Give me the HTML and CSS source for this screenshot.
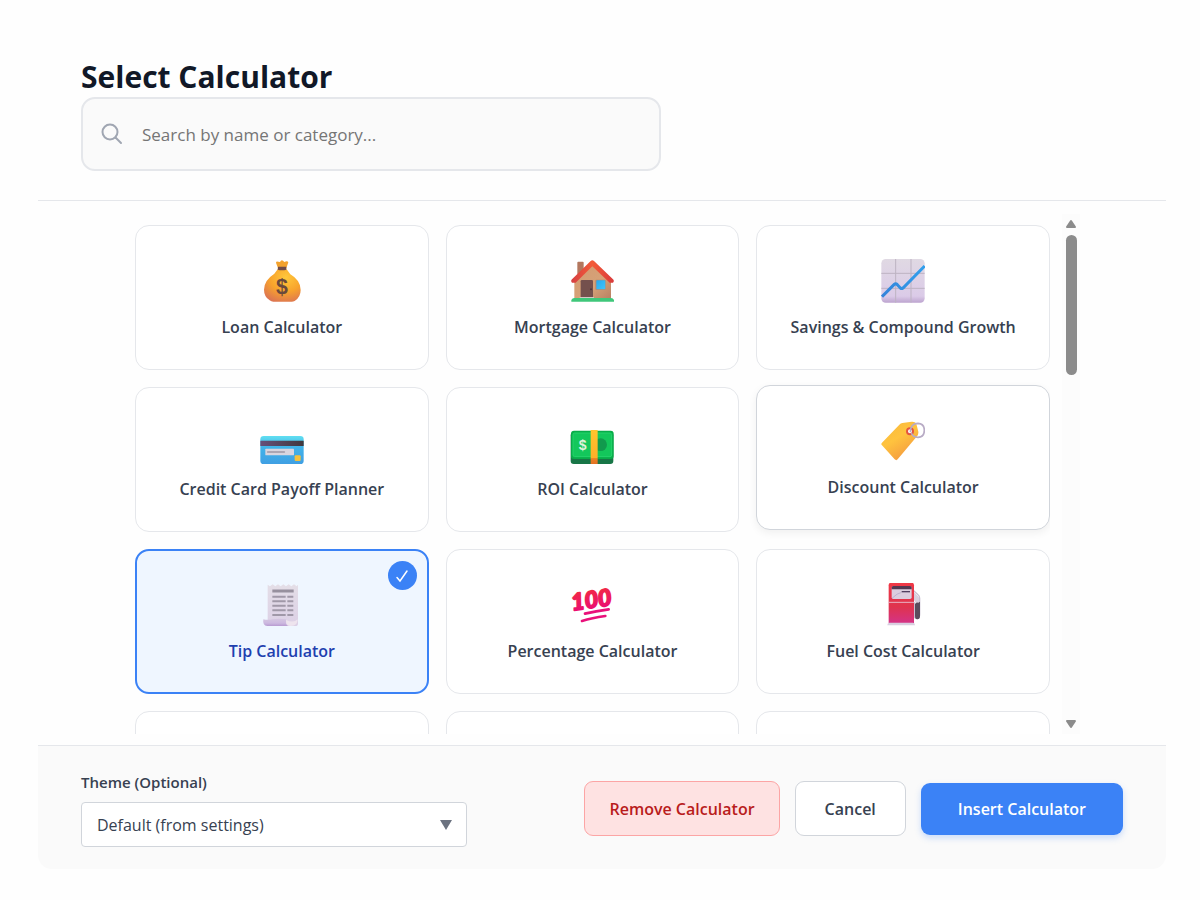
FILE: index.html
```html
<!DOCTYPE html>
<html lang="en">
<head>
  <meta charset="UTF-8">
  <meta name="viewport" content="width=device-width, initial-scale=1.0">
  <title>Select Calculator</title>
  <link rel="stylesheet" href="styles.css">
</head>
<body>
  <div class="modal">
    <header class="modal-header">
      <h1>Select Calculator</h1>
      <label class="search">
        <svg width="22" height="22" viewBox="0 0 22 22" fill="none" stroke="#a0a6b2" stroke-width="2" stroke-linecap="round" aria-hidden="true">
          <circle cx="9" cy="9" r="7.5"/>
          <path d="M14.5 14.5l5.5 5.5"/>
        </svg>
        <input type="text" placeholder="Search by name or category..." aria-label="Search calculators">
      </label>
    </header>

    <main class="modal-body">
      <div class="list">
        <div class="grid">
          <button type="button" class="card">
            <svg class="icon" viewBox="60 30 132 132" aria-hidden="true">
              <defs>
                <radialGradient id="bag" cx=".6" cy=".25" r=".8"><stop offset="0" stop-color="#ffc83b"/><stop offset=".55" stop-color="#f8a32c"/><stop offset="1" stop-color="#dd7651"/></radialGradient>
              </defs>
              <path d="M115 60l-7-19q0-5 7-3l5 1q5-11 13 0l6-2q8 0 5 6l-6 17z" fill="#f3a22d"/>
              <path d="M113 61h27l11 15q31 18 31 47 0 22-18 33-4 2-9 2h-55q-6 0-11-4-17-11-17-32 0-28 31-48z" fill="url(#bag)"/>
              <path d="M114 53h25v9q-13 4-26 0z" fill="#704b47"/>
              <text class="dollar" x="126" y="135" font-size="64" fill="#69493c">$</text>
            </svg>
            <span>Loan Calculator</span>
          </button>

          <button type="button" class="card">
            <svg class="icon" viewBox="61 30 132 132" aria-hidden="true">
              <defs>
                <linearGradient id="wall" x2="1" y2="1"><stop offset="0" stop-color="#d39a70"/><stop offset=".6" stop-color="#d6a278"/><stop offset="1" stop-color="#b88063"/></linearGradient>
                <linearGradient id="roof" x2="1"><stop offset="0" stop-color="#d64042"/><stop offset=".5" stop-color="#f35b38"/><stop offset="1" stop-color="#d93a3b"/></linearGradient>
                <linearGradient id="pane" x2="1" y2="1"><stop offset="0" stop-color="#28a9ee"/><stop offset="1" stop-color="#42c5fa"/></linearGradient>
              </defs>
              <path d="M83 41q0-3 3-3h13q3 0 3 3v34H83z" fill="#b3775e"/>
              <path d="M74 96l54-52 56 52v53H74z" fill="url(#wall)"/>
              <path d="M67 101q-5-5 0-10l56-55q5-4 10 0l57 55q5 5 0 10H180l-52-49-50 49z" fill="url(#roof)"/>
              <path d="M93 97q0-4 4-4h29q4 0 4 4v49H93z" fill="#74504d"/>
              <circle cx="124" cy="121" r="3" fill="#4f363b"/>
              <rect x="137" y="92" width="31" height="31" rx="3" fill="#bb886a"/>
              <rect x="140" y="94" width="27" height="27" rx="2" fill="url(#pane)"/>
              <path d="M90 144h43v4H90z" fill="#d6c6c4"/>
              <path d="M65 158v-5q3-6 9-6h110q6 0 9 6v5z" fill="#3fc77a"/>
            </svg>
            <span>Mortgage Calculator</span>
          </button>

          <button type="button" class="card">
            <svg class="icon" viewBox="63 27 132 132" aria-hidden="true">
              <defs>
                <linearGradient id="sheet" x2="0" y2="1"><stop offset="0" stop-color="#e0d9e3"/><stop offset=".85" stop-color="#dbcbe8"/><stop offset="1" stop-color="#bda4cf"/></linearGradient>
                <linearGradient id="trend" x2="1"><stop offset="0" stop-color="#3584da"/><stop offset="1" stop-color="#319fec"/></linearGradient>
              </defs>
              <rect x="64" y="27" width="130" height="131" rx="13" fill="url(#sheet)"/>
              <path d="M107 27v131M153 27v131M64 70h130M64 115h130" stroke="#bdb3c2" stroke-width="3"/>
              <path d="M66 140l36-36q5-5 10 0l9 10q4 3 8 0l65-66" fill="none" stroke="url(#trend)" stroke-width="9"/>
            </svg>
            <span>Savings &amp; Compound Growth</span>
          </button>

          <button type="button" class="card">
            <svg class="icon" viewBox="60 33 132 132" aria-hidden="true">
              <defs>
                <linearGradient id="plastic" x2="0" y2="1"><stop offset="0" stop-color="#60dff1"/><stop offset=".4" stop-color="#41b3e9"/><stop offset="1" stop-color="#409fe3"/></linearGradient>
                <linearGradient id="stripe" x2="1"><stop offset="0" stop-color="#66507a"/><stop offset="1" stop-color="#40383d"/></linearGradient>
              </defs>
              <rect x="61" y="78" width="130" height="84" rx="10" fill="url(#plastic)"/>
              <path d="M61 92h130v16H61z" fill="url(#stripe)"/>
              <rect x="76" y="116" width="86" height="20" rx="2" fill="#d9d5df"/>
              <path d="M83 126h50" stroke="#9e96a5" stroke-width="5" stroke-linecap="round"/>
              <rect x="164" y="136" width="18" height="17" rx="3" fill="#f5c13d"/>
            </svg>
            <span>Credit Card Payoff Planner</span>
          </button>

          <button type="button" class="card">
            <svg class="icon" viewBox="61 33 132 132" aria-hidden="true">
              <defs>
                <linearGradient id="strap" x2="0" y2="1"><stop offset="0" stop-color="#ffc52d"/><stop offset=".82" stop-color="#ffaf29"/><stop offset=".84" stop-color="#ed8124"/><stop offset="1" stop-color="#e17122"/></linearGradient>
              </defs>
              <rect x="63" y="67" width="128" height="95" rx="9" fill="#187647"/>
              <rect x="64" y="62" width="128" height="85" rx="9" fill="#08ad49"/>
              <rect x="70" y="69" width="116" height="71" rx="5" fill="#13c75b" stroke="#25d36c" stroke-width="3"/>
              <circle cx="153" cy="104" r="19" fill="#119a4d"/>
              <text class="dollar" x="99" y="120" font-size="42" fill="#e0f2dc">$</text>
              <path d="M123 60h21v102h-21z" fill="url(#strap)"/>
            </svg>
            <span>ROI Calculator</span>
          </button>

          <button type="button" class="card raised">
            <svg class="icon" viewBox="63 27 132 132" aria-hidden="true">
              <defs>
                <linearGradient id="tag" x2=".6" y2="1"><stop offset="0" stop-color="#f8b83c"/><stop offset=".5" stop-color="#ffc33e"/><stop offset="1" stop-color="#f49a40"/></linearGradient>
              </defs>
              <path d="M66 98l52-54q4-4 9-5l28-4q10-1 14 6l6 24q1 8-4 14l-58 69q-4 5-9 0l-38-42q-4-4 0-8z" fill="url(#tag)"/>
              <circle cx="150" cy="64" r="9" fill="#fff" stroke="#e45440" stroke-width="6"/>
              <path d="M151 67q0-27 23-27 19 1 19 21t-19 21q-15 0-20-13" fill="none" stroke="#b8abc5" stroke-width="5"/>
            </svg>
            <span>Discount Calculator</span>
          </button>

          <button type="button" class="card selected" aria-pressed="true">
            <svg class="icon" viewBox="60 39 132 132" aria-hidden="true">
              <defs>
                <linearGradient id="paper" x2="0" y2="1"><stop offset="0" stop-color="#e4dee7"/><stop offset="1" stop-color="#dcd0e6"/></linearGradient>
                <linearGradient id="curl" x2="0" y2="1"><stop offset="0" stop-color="#d4c6e0"/><stop offset=".6" stop-color="#cdb9e0"/><stop offset="1" stop-color="#b89bd1"/></linearGradient>
              </defs>
              <path d="M83 44l7 5 8-6 8 6 8-6 8 6 8-6 8 6 8-6 8 6 8-6 8 6 4-5v117q0 7-8 7H83z" fill="url(#paper)"/>
              <path d="M70 148q14 3 27 0 20-4 41 0v13q2 7 9 7H82q-15-1-12-20z" fill="url(#curl)"/>
              <path d="M138 150q-1 18 15 18 20 0 20-20-12 12-35 2z" fill="#eee4ee"/>
              <path d="M97 63h64" stroke="#97909e" stroke-width="9"/>
              <path d="M97 80h40M142 80h18M97 94h40M142 94h18M97 107h40M142 107h18M97 121h40M142 121h18M97 135h40M142 135h18" stroke="#a098a8" stroke-width="6"/>
            </svg>
            <span>Tip Calculator</span>
            <i class="check">
              <svg width="14" height="14" viewBox="0 0 14 14" fill="none" stroke="#fff" stroke-width="1.5" stroke-linecap="round" aria-hidden="true"><path d="M2 8.5L5 12 12 2"/></svg>
            </i>
          </button>

          <button type="button" class="card">
            <svg class="icon" viewBox="61 39 132 132" aria-hidden="true">
              <defs>
                <linearGradient id="score" x2="0" y2="1"><stop offset="0" stop-color="#f32e3b"/><stop offset="1" stop-color="#e9087b"/></linearGradient>
              </defs>
              <text class="hundred" x="68" y="122" font-size="70" fill="url(#score)" stroke="url(#score)" stroke-width="5" stroke-linejoin="round" transform="rotate(-8 68 122)">100</text>
              <path d="M106 131q32-8 71-13M97 153q29-9 70-15" fill="none" stroke="#e9107a" stroke-width="8" stroke-linecap="round"/>
            </svg>
            <span>Percentage Calculator</span>
          </button>

          <button type="button" class="card">
            <svg class="icon" viewBox="63 39 132 132" aria-hidden="true">
              <defs>
                <linearGradient id="pump" x2="0" y2="1"><stop offset="0" stop-color="#f03745"/><stop offset=".6" stop-color="#df334e"/><stop offset="1" stop-color="#d43387"/></linearGradient>
              </defs>
              <path d="M158 59l16 15q5 4 5 11v48q0 13-8 13t-8-11V97" fill="none" stroke="#c9bfd1" stroke-width="4"/>
              <path d="M162 67l15 15v16h-10l-5-8z" fill="#d8cfdd"/>
              <path d="M165 102q3-5 10-4l5-3v43q0 10-8 10-7 0-7-10z" fill="#5a4c5d"/>
              <path d="M86 46q0-9 10-9h56q10 0 10 9v114H86z" fill="url(#pump)"/>
              <path d="M86 97h76" stroke="#e7b4c5" stroke-width="3"/>
              <rect x="95" y="49" width="60" height="38" rx="5" fill="#dbcede"/>
              <path d="M95 58v-5q0-5 5-5h50q5 0 5 5v5z" fill="#523650"/>
              <path d="M125 65h25" stroke="#514060" stroke-width="4"/>
              <path d="M96 85q16-16 29-18" fill="none" stroke="#bfb1cc" stroke-width="3"/>
              <path d="M82 166q0-8 6-8h71q6 0 6 8z" fill="#d9cfe0"/>
            </svg>
            <span>Fuel Cost Calculator</span>
          </button>

          <button type="button" class="card" aria-label="More"></button>
          <button type="button" class="card" aria-label="More"></button>
          <button type="button" class="card" aria-label="More"></button>
        </div>
      </div>
      <div class="scrollbar" aria-hidden="true">
        <svg width="12" height="10" viewBox="0 0 12 10"><path d="M6 2L10 8H2z" fill="#8b8b8b" stroke="#8b8b8b" stroke-width="2" stroke-linejoin="round"/></svg>
        <div class="thumb"></div>
        <svg width="12" height="10" viewBox="0 0 12 10"><path d="M6 8L10 2H2z" fill="#8b8b8b" stroke="#8b8b8b" stroke-width="2" stroke-linejoin="round"/></svg>
      </div>
    </main>

    <footer class="modal-footer">
      <div class="theme">
        <label for="theme">Theme (Optional)</label>
        <div class="select">
          <select id="theme">
            <option>Default (from settings)</option>
          </select>
          <svg width="12" height="10" viewBox="0 0 12 10" aria-hidden="true"><path d="M0 0h12L6 10z" fill="#6b7280"/></svg>
        </div>
      </div>
      <div class="actions">
        <button type="button" class="btn remove">Remove Calculator</button>
        <button type="button" class="btn cancel">Cancel</button>
        <button type="button" class="btn insert">Insert Calculator</button>
      </div>
    </footer>
  </div>
</body>
</html>
```
FILE: styles.css
```css
* {
  box-sizing: border-box;
}
body {
  margin: 0;
  padding: 0 34px 0 38px;
  background: #fefefe;
  color: #374151;
  font-family: "Open Sans", "Noto Sans", sans-serif;
}
button, input, select {
  font-family: inherit;
}

/* header */
.modal-header {
  padding: 57px 43px 29px;
  border-bottom: 1px solid #e5e7eb;
}
h1 {
  margin: 0;
  font-size: 30px;
  line-height: 40px;
  font-weight: 700;
  color: #111827;
}
.search {
  display: flex;
  align-items: center;
  gap: 17px;
  max-width: 580px;
  height: 74px;
  padding: 0 18px;
  border: 2px solid #e5e7eb;
  border-radius: 14px;
  background: #fafafa;
}
.search input {
  flex: 1;
  border: 0;
  outline: 0;
  background: transparent;
  font-size: 17px;
  color: #374151;
}
.search input::placeholder {
  color: #757575;
}

/* calculator list */
.modal-body {
  display: flex;
  gap: 12px;
  padding: 13px 86px 11px 97px;
}
.list {
  flex: 1;
  height: 520px;
  overflow-y: auto;
  scrollbar-width: none;
}
.grid {
  display: grid;
  grid-template-columns: repeat(3, 1fr);
  gap: 17px;
  padding-top: 11px;
}
.card {
  position: relative;
  display: flex;
  flex-direction: column;
  align-items: center;
  gap: 12px;
  height: 145px;
  padding: 33px 12px 0;
  border: 1px solid #e5e7eb;
  border-radius: 14px;
  background: #fff;
  color: #374151;
  font-size: 16px;
  line-height: 24px;
  font-weight: 600;
  cursor: pointer;
}
.icon {
  width: 44px;
  height: 44px;
}
.dollar {
  font-family: "Liberation Sans", sans-serif;
  font-weight: 700;
  text-anchor: middle;
}
.hundred {
  font-family: Lato, sans-serif;
  font-weight: 900;
  font-style: italic;
}
.card.raised {
  border-color: #d1d5db;
  box-shadow: 0 3px 8px rgba(0, 0, 0, 0.06);
  transform: translateY(-2px);
}
.card.selected {
  padding-top: 32px;
  border: 2px solid #3b82f6;
  background: #eff6ff;
  color: #1e40af;
}
.check {
  position: absolute;
  top: 10px;
  right: 10px;
  display: flex;
  align-items: center;
  justify-content: center;
  width: 29px;
  height: 29px;
  border-radius: 50%;
  background: #3b82f6;
}

.scrollbar {
  display: flex;
  flex-direction: column;
  align-items: center;
  gap: 6px;
  width: 18px;
  padding: 5px 0;
  background: #fcfcfc;
}
.thumb {
  width: 11px;
  height: 140px;
  margin-bottom: auto;
  border-radius: 6px;
  background: #8b8b8b;
}

/* footer */
.modal-footer {
  display: flex;
  align-items: center;
  justify-content: space-between;
  gap: 24px;
  padding: 24px 43px 22px;
  border-top: 1px solid #e5e7eb;
  border-radius: 0 0 14px 14px;
  background: #fafafa;
}
.theme {
  flex: 0 1 386px;
}
.theme label {
  display: block;
  margin-bottom: 8px;
  font-size: 15px;
  line-height: 24px;
  font-weight: 600;
}
.select {
  display: grid;
  align-items: center;
}
.select select,
.select svg {
  grid-area: 1 / 1;
}
.select select {
  width: 100%;
  height: 45px;
  padding: 0 15px;
  border: 1px solid #d1d5db;
  border-radius: 4px;
  background: #fff;
  color: #374151;
  font-size: 16px;
  appearance: none;
}
.select svg {
  justify-self: end;
  margin-right: 15px;
  pointer-events: none;
}
.actions {
  display: flex;
  align-items: center;
  gap: 15px;
}
.btn {
  height: 55px;
  padding: 0 24px;
  border: 1px solid;
  border-radius: 9px;
  font-size: 16px;
  font-weight: 600;
  cursor: pointer;
}
.remove {
  border-color: #fca5a5;
  background: #fee2e2;
  color: #b91c1c;
}
.cancel {
  padding: 0 29px;
  border-color: #d1d5db;
  background: #fff;
  color: #374151;
}
.insert {
  height: 52px;
  padding: 0 37px;
  border: 0;
  background: #3b82f6;
  color: #fff;
  box-shadow: 0 3px 6px rgba(59, 130, 246, 0.25);
}
```
